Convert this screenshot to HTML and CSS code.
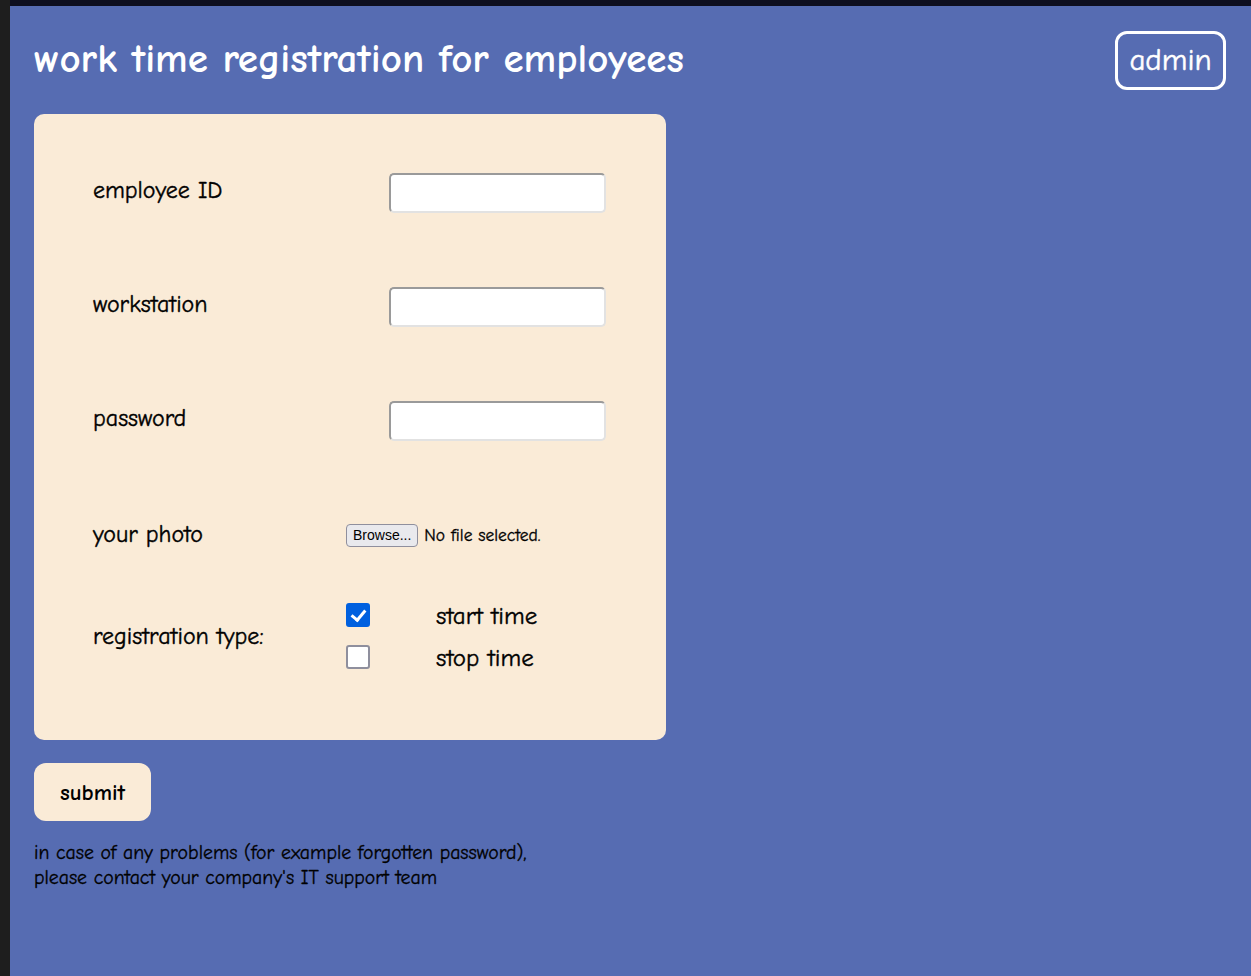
FILE: index.html
```html
<!DOCTYPE html>
<html lang="en">
<head>
<meta charset="utf-8">
<title>work time registration for employees</title>
<link rel="stylesheet" href="styles.css">
</head>
<body>
<div class="frame-left"></div>
<main class="page">
  <header class="header">
    <h1 class="title">work time registration for employees</h1>
    <button class="admin" type="button">admin</button>
  </header>
  <form class="card">
    <div class="row">
      <label class="label">employee ID</label>
      <div class="control control-end"><input class="text-input" type="text"></div>
    </div>
    <div class="row">
      <label class="label">workstation</label>
      <div class="control control-end"><input class="text-input" type="text"></div>
    </div>
    <div class="row">
      <label class="label">password</label>
      <div class="control control-end"><input class="text-input" type="password"></div>
    </div>
    <div class="row row-photo">
      <label class="label">your photo</label>
      <div class="control"><span class="browse">Browse...</span><span class="nofile">No file selected.</span></div>
    </div>
    <div class="row row-type">
      <label class="label">registration type:</label>
      <div class="control checks">
        <div class="check-row"><input class="check" type="checkbox" checked><span class="check-label">start time</span></div>
        <div class="check-row"><input class="check" type="checkbox"><span class="check-label">stop time</span></div>
      </div>
    </div>
  </form>
  <button class="submit" type="button">submit</button>
  <p class="help">in case of any problems (for example forgotten password),<br>please contact your company's IT support team</p>
</main>
</body>
</html>
```
FILE: styles.css
```css
html, body {
  margin: 0;
  height: 100%;
}
body {
  display: flex;
  background: #1e1e1e;
  font-family: "Comic Sans MS", "Comic Neue", "DejaVu Sans", sans-serif;
  overflow: hidden;
}
.frame-left {
  width: 10px;
  flex: none;
  background: #1e1e1e;
}
.page {
  flex: 1;
  background: #566cb2;
  border-top: 6px solid #0e0f1f;
  padding: 0 25px 0 24px;
  min-height: 100%;
  box-sizing: border-box;
}
.header {
  display: flex;
  align-items: center;
  justify-content: space-between;
  padding-top: 25px;
  margin-bottom: 24px;
  height: 59px;
}
.title {
  margin: -4px 0 0;
  color: #fff;
  font-size: 41px;
  font-weight: bold;
  line-height: 1;
}
.admin {
  width: 111px;
  height: 59px;
  padding: 0;
  border: 3px solid #fff;
  border-radius: 12px;
  background: transparent;
  color: #fff;
  font-family: inherit;
  font-size: 31px;
  line-height: 1;
  -webkit-text-stroke: 0.5px #fff;
}
.card {
  width: 632px;
  height: 626px;
  box-sizing: border-box;
  background: #faebd7;
  border-radius: 10px;
  padding: 59px 60px 0 59px;
}
.row {
  display: flex;
  align-items: center;
  height: 40px;
  margin-bottom: 74px;
}
.row-photo {
  margin-bottom: 46px;
}
.row-type {
  height: 72px;
  margin-bottom: 0;
}
.label {
  width: 253px;
  flex: none;
  font-size: 24px;
  line-height: 1;
  margin-top: -6px;
  color: #000;
  -webkit-text-stroke: 0.4px #000;
}
.row-photo .label,
.row-type .label {
  margin-top: -2px;
}
.control {
  flex: 1;
  display: flex;
  align-items: center;
}
.control-end {
  justify-content: flex-end;
}
.text-input {
  width: 217px;
  height: 40px;
  box-sizing: border-box;
  border: 2px solid;
  border-color: #9a9a9a #e2e2e2 #e2e2e2 #9a9a9a;
  border-radius: 5px;
  background: #fff;
}
.browse {
  display: inline-block;
  font-family: "Liberation Sans", Arial, sans-serif;
  font-size: 14px;
  line-height: 19px;
  padding: 1px 6px;
  border: 1px solid #8f8f9d;
  border-radius: 4px;
  background: #e9e9ed;
  color: #000;
  margin-right: 6px;
}
.nofile {
  font-size: 17.5px;
  color: #000;
  -webkit-text-stroke: 0.3px #000;
}
.checks {
  flex-direction: column;
  align-items: flex-start;
  gap: 17px;
  margin-top: -2px;
}
.check-row {
  display: flex;
  align-items: center;
}
.check {
  appearance: none;
  -webkit-appearance: none;
  width: 24px;
  height: 24px;
  margin: 0 66px 0 0;
  box-sizing: border-box;
  border: 2px solid #8f8f9d;
  border-radius: 3px;
  background: #fff;
  position: relative;
}
.check:checked {
  background: #0060df;
  border-color: #0060df;
}
.check:checked::after {
  content: "";
  position: absolute;
  left: 6px;
  top: 2px;
  width: 6px;
  height: 11px;
  border: solid #fff;
  border-width: 0 3px 3px 0;
  transform: rotate(40deg);
}
.check-label {
  font-size: 25px;
  line-height: 1;
  color: #000;
  -webkit-text-stroke: 0.4px #000;
}
.submit {
  display: block;
  margin-top: 23px;
  width: 117px;
  height: 58px;
  border: none;
  border-radius: 12px;
  background: #faebd7;
  color: #000;
  font-family: inherit;
  font-size: 23px;
  font-weight: bold;
}
.help {
  margin: 19px 0 0;
  font-size: 19.8px;
  line-height: 25px;
  color: #000;
  -webkit-text-stroke: 0.3px #000;
}
```
